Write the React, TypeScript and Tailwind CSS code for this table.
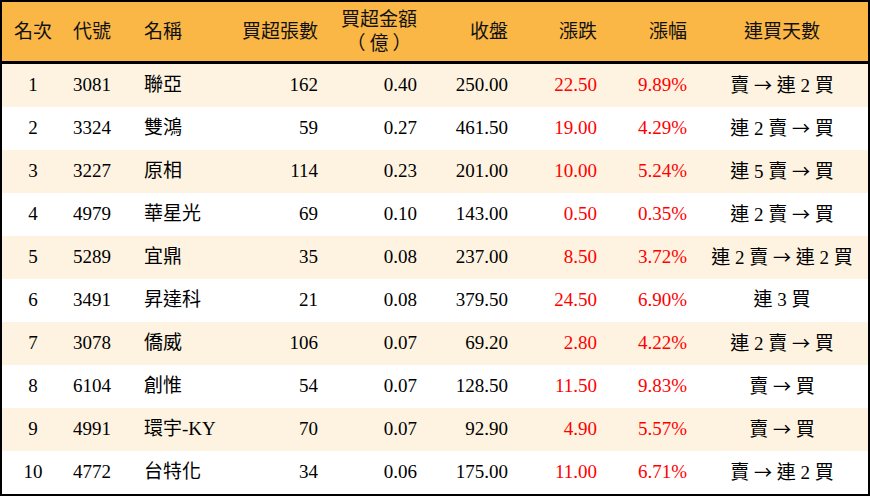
const rows = [
  { rank: 1, code: '3081', name: '聯亞', vol: 162, amt: '0.40', close: '250.00', chg: '22.50', pct: '9.89%', streak: '賣 → 連 2 買' },
  { rank: 2, code: '3324', name: '雙鴻', vol: 59, amt: '0.27', close: '461.50', chg: '19.00', pct: '4.29%', streak: '連 2 賣 → 買' },
  { rank: 3, code: '3227', name: '原相', vol: 114, amt: '0.23', close: '201.00', chg: '10.00', pct: '5.24%', streak: '連 5 賣 → 買' },
  { rank: 4, code: '4979', name: '華星光', vol: 69, amt: '0.10', close: '143.00', chg: '0.50', pct: '0.35%', streak: '連 2 賣 → 買' },
  { rank: 5, code: '5289', name: '宜鼎', vol: 35, amt: '0.08', close: '237.00', chg: '8.50', pct: '3.72%', streak: '連 2 賣 → 連 2 買' },
  { rank: 6, code: '3491', name: '昇達科', vol: 21, amt: '0.08', close: '379.50', chg: '24.50', pct: '6.90%', streak: '連 3 買' },
  { rank: 7, code: '3078', name: '僑威', vol: 106, amt: '0.07', close: '69.20', chg: '2.80', pct: '4.22%', streak: '連 2 賣 → 買' },
  { rank: 8, code: '6104', name: '創惟', vol: 54, amt: '0.07', close: '128.50', chg: '11.50', pct: '9.83%', streak: '賣 → 買' },
  { rank: 9, code: '4991', name: '環宇-KY', vol: 70, amt: '0.07', close: '92.90', chg: '4.90', pct: '5.57%', streak: '賣 → 買' },
  { rank: 10, code: '4772', name: '台特化', vol: 34, amt: '0.06', close: '175.00', chg: '11.00', pct: '6.71%', streak: '賣 → 連 2 買' },
];

const cols = 'grid grid-cols-[62px_71px_85px_107px_99px_91px_89px_90px_172px] items-center';

// the arrow in the picture is the long CJK one, not the serif one
function Streak({ text }: { text: string }) {
  const parts = text.split('→');
  return (
    <>
      {parts.map((p, i) => (
        <span key={i}>
          {p}
          {i < parts.length - 1 && <span className="font-['Noto_Sans_CJK_TC'] text-[18px]">→</span>}
        </span>
      ))}
    </>
  );
}

export default function App() {
  return (
    <div
      className="w-[870px] h-[496px] border-2 border-black bg-white text-[19px] text-black overflow-hidden"
      style={{ fontFamily: '"Liberation Serif", "Noto Sans CJK TC", serif' }}
    >
      <div className={`${cols} h-[62px] bg-[#fab746] border-b-[3px] border-black leading-[24px] text-[#111]`}>
        <div className="text-center">名次</div>
        <div className="pl-[9px]">代號</div>
        <div className="pl-[9px]">名稱</div>
        <div className="pr-[9px] text-right">買超張數</div>
        <div className="pr-[9px] text-right">
          <div className="inline-block text-center">
            買超金額
            <br />
            <span>（</span>
            <span className="mx-[4px]">億</span>
            <span>）</span>
          </div>
        </div>
        <div className="pr-[9px] text-right">收盤</div>
        <div className="pr-[9px] text-right">漲跌</div>
        <div className="pr-[9px] text-right">漲幅</div>
        <div className="text-center">連買天數</div>
      </div>
      {rows.map((r, i) => (
        <div key={r.rank} className={`${cols} h-[43px] ${i % 2 === 0 ? 'bg-[#fdf3e0]' : 'bg-white'}`}>
          <div className="text-center">{r.rank}</div>
          <div className="pl-[9px]">{r.code}</div>
          <div className="pl-[9px]">{r.name}</div>
          <div className="pr-[9px] text-right">{r.vol}</div>
          <div className="pr-[9px] text-right">{r.amt}</div>
          <div className="pr-[9px] text-right">{r.close}</div>
          <div className="pr-[9px] text-right text-[#f00]">{r.chg}</div>
          <div className="pr-[9px] text-right text-[#f00]">{r.pct}</div>
          <div className="text-center whitespace-nowrap">
            <Streak text={r.streak} />
          </div>
        </div>
      ))}
    </div>
  );
}
